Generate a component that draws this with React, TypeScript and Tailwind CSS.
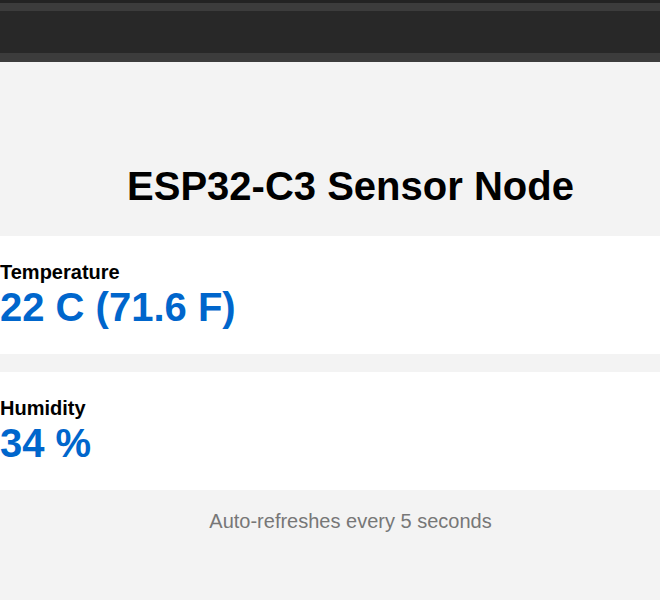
export default function App() {
  return (
    <div
      className="w-[660px] h-[600px] overflow-hidden bg-[#f3f3f3]"
      style={{ fontFamily: '"Liberation Sans", Arial, sans-serif' }}
    >
      <div className="h-[3px] bg-[#232323]" />
      <div className="h-[8px] bg-[#3c3c3c]" />
      <div className="h-[42px] bg-[#282828]" />
      <div className="h-[9px] bg-[#3c3c3c]" />
      <div className="w-[701px]">
        <h1 className="mt-[101px] mb-[27px] text-center text-[40px] leading-[46px] font-bold text-black">
          ESP32-C3 Sensor Node
        </h1>
        <div className="bg-white pt-[25px] pb-[24px]">
          <div className="text-[20px] leading-[23px] font-bold text-black">Temperature</div>
          <div className="text-[40px] leading-[46px] font-bold text-[#0066cc]">22 C (71.6 F)</div>
        </div>
        <div className="mt-[18px] bg-white pt-[25px] pb-[24px]">
          <div className="text-[20px] leading-[23px] font-bold text-black">Humidity</div>
          <div className="text-[40px] leading-[46px] font-bold text-[#0066cc]">34 %</div>
        </div>
        <p className="mt-[20px] text-center text-[20px] leading-[23px] text-[#777777]">
          Auto-refreshes every 5 seconds
        </p>
      </div>
    </div>
  );
}
